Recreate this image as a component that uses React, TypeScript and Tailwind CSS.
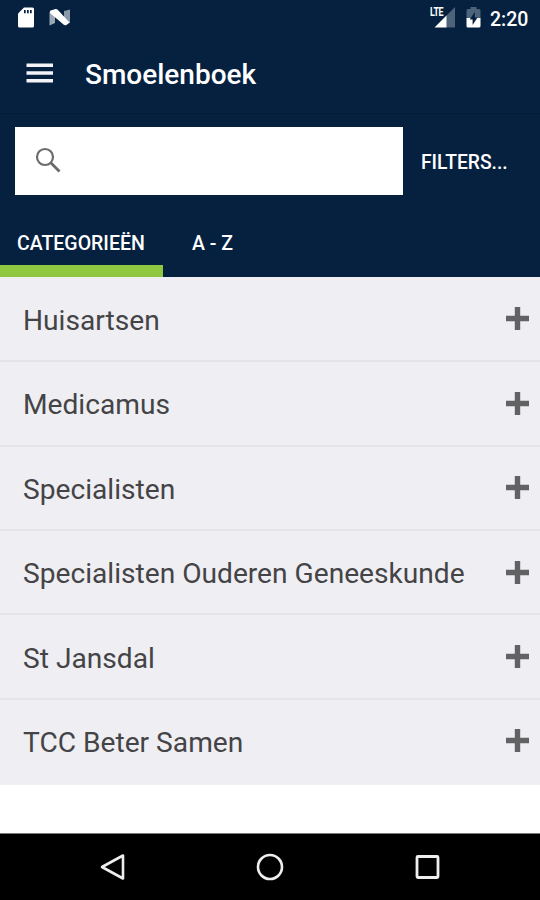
import React from "react";

const categories = [
  "Huisartsen",
  "Medicamus",
  "Specialisten",
  "Specialisten Ouderen Geneeskunde",
  "St Jansdal",
  "TCC Beter Samen",
];

function StatusBar() {
  return (
    <div className="flex h-9 shrink-0 items-start pl-[18px] pr-[11px]">
      <svg className="mt-[7px] h-[21px] w-4" viewBox="0 0 16 21">
        <path d="M6 .5h8.500Q16 .5 16 2v17q0 1.500-1.500 1.500h-13Q0 20.500 0 19V6.500z" fill="#fff" />
        <path d="M6 3h1.700v3.300H6zM9 3h1.700v3.300H9zM12 3h1.700v3.300H12z" fill="#04203f" />
      </svg>
      <svg className="ml-[15px] mt-2 h-[18px] w-[22px]" viewBox="0 0 22 18">
        <path d="M.5 4 6 6v9L.5 17.500z" fill="#9aa8b5" />
        <path d="m15 3 6-1.500v13.500l-6 1z" fill="#8798a8" />
        <path d="M1 2.800 6.500 1q1.200-.3 2.200.7L20.500 14.500 17.500 17q-1.700.8-3-.4L1 5z" fill="#fff" />
      </svg>
      <div className="flex-1" />
      <div className="relative mt-[7px] h-[21px] w-[26px]">
        <svg className="absolute inset-0" width="26" height="21" viewBox="0 0 26 21">
          <path d="M26 0v20.500h-9V9z" fill="#4c6379" />
          <path d="M17.500 8.500v12H5.500z" fill="#fff" />
        </svg>
        <span className="absolute left-[1px] top-0 origin-left scale-x-[.74] text-[12px] font-bold leading-[10px] tracking-[-.5px]">LTE</span>
      </div>
      <svg className="ml-[11px] mt-[7px] h-[21px] w-[15px]" viewBox="0 0 15 21">
        <path d="M4.500 0h6v2H13q1.500 0 1.500 1.500V11H.5V3.500Q.5 2 2 2h2.500z" fill="#4c6379" />
        <path d="M.5 11h14v8q0 1.500-1.500 1.500H2Q.5 20.500.5 19z" fill="#fff" />
        <path d="M8.800 5 3.700 12.500h2.900V18l4.900-7.500H8.800z" fill="#04203f" />
      </svg>
      <span className="ml-[9px] mt-2 w-[39px] whitespace-nowrap text-[19.500px] font-medium leading-[23px]">2:20</span>
    </div>
  );
}

export default function App() {
  return (
    <div className="flex h-[900px] w-[540px] flex-col overflow-hidden bg-white font-['Roboto',sans-serif]">
      <header className="flex h-[276.500px] shrink-0 flex-col bg-[#05213f] text-white">
        <StatusBar />
        <div className="flex h-[78px] shrink-0 items-center border-b border-[#041c36] pl-[26px]">
          <svg className="-mt-[3px] h-5 w-[27px]" viewBox="0 0 27 20">
            <path d="M.5.500h26.500v3.500H.500zM.5 8.200h26.500v3.500H.500zM.5 16h26.500v3.500H.500z" fill="#f4f4f8" />
          </svg>
          <h1 className="ml-8 mt-[1px] text-[28px] font-medium leading-8">Smoelenboek</h1>
        </div>
        <div className="mt-[13px] flex h-[68px] shrink-0 items-center pl-[14.500px]">
          <div className="flex h-full w-[388.500px] items-center bg-white pl-5">
            <svg className="h-7 w-7" viewBox="0 0 28 28" fill="none" stroke="#6b6b6b">
              <circle cx="10" cy="10" r="8" strokeWidth="2.200" />
              <path d="m16 16 8.500 8.500" strokeWidth="2.900" />
            </svg>
          </div>
          <button className="ml-[18px] mt-[3px] text-[19.300px] font-medium leading-6">FILTERS...</button>
        </div>
        <nav className="flex flex-1 text-[19.500px] font-medium leading-6">
          <button className="flex w-[163px] flex-col items-start justify-between">
            <span className="mt-[37px] pl-[17px]">CATEGORIEËN</span>
            <span className="h-3 w-full bg-[#8fc740]" />
          </button>
          <button className="flex items-start pl-[29px] pt-[37px]">A - Z</button>
        </nav>
      </header>
      <ul className="h-[508px] shrink-0 bg-[#efeef3] pt-[1.300px]">
        {categories.map((name) => (
          <li key={name} className="flex h-[84.400px] items-center justify-between border-b-2 border-[#e4e4e8] pl-[23px] pr-[11px] last:border-transparent">
            <span className="mt-1 text-[28.150px] leading-8 text-[#444446]">{name}</span>
            <svg className="h-[23px] w-[23px]" viewBox="0 0 23 23">
              <path d="M8.800 0h5.400v8.800H23v5.400h-8.800V23H8.800v-8.800H0V8.800h8.800z" fill="#626264" />
            </svg>
          </li>
        ))}
      </ul>
      <div className="flex-1" />
      <footer className="flex h-[67px] shrink-0 items-center justify-center gap-[129px] border-t border-[#777] bg-black">
        <svg className="h-7 w-7" viewBox="0 0 28 28" fill="none" stroke="#eee" strokeWidth="2.600" strokeLinejoin="round">
          <path d="M24 2.500v23L3 14z" />
        </svg>
        <svg className="h-7 w-7" viewBox="0 0 28 28" fill="none" stroke="#eee" strokeWidth="2.600">
          <circle cx="14" cy="14" r="12" />
        </svg>
        <svg className="h-7 w-7" viewBox="0 0 28 28" fill="none" stroke="#eee" strokeWidth="2.800">
          <rect x="4" y="3.500" width="21" height="21" rx="1" />
        </svg>
      </footer>
    </div>
  );
}
